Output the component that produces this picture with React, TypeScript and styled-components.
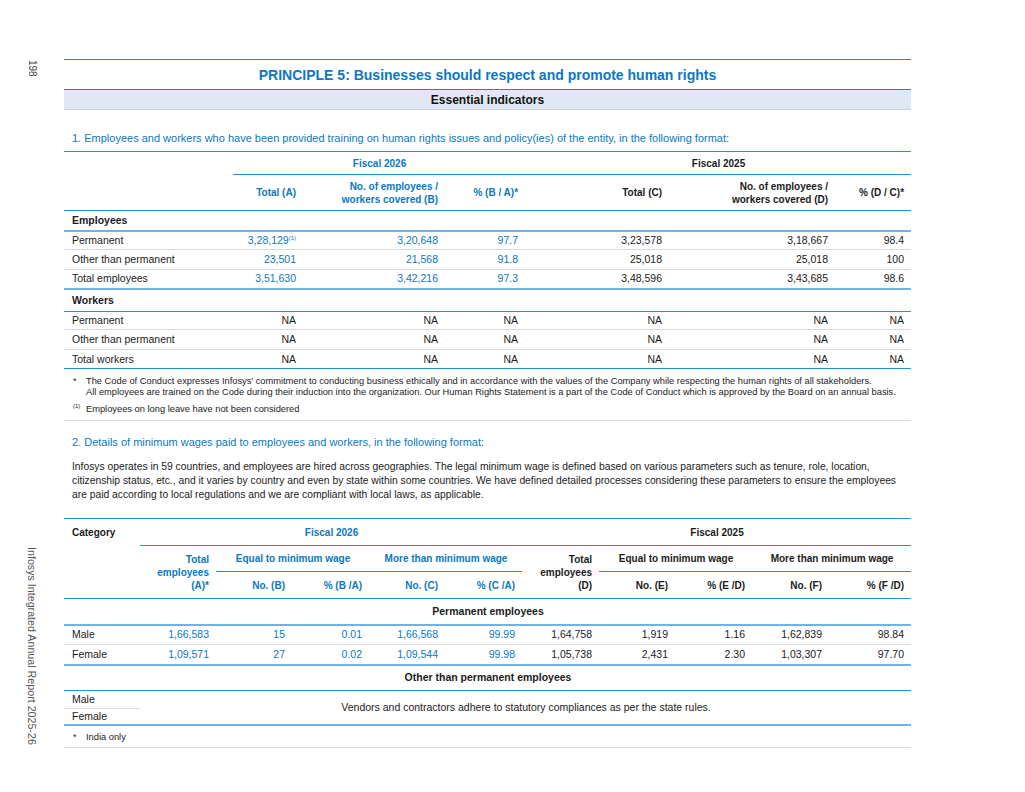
import styled, { createGlobalStyle } from "styled-components";

const GlobalStyle = createGlobalStyle`
  html, body {
    margin: 0;
    padding: 0;
    background: #fff;
  }
  body {
    font-family: "Liberation Sans", Arial, sans-serif;
    color: #1b1b1b;
  }
`;

type Align = "left" | "right" | "center";
type Tone = "blue" | "ink";
type Rule = "none" | "blue" | "heavy" | "grey";

const BLUE = "#0b78c2";
const rules: Record<Rule, string> = {
  none: "none",
  blue: "1px solid #2b8fd5",
  heavy: "2px solid #6db3e6",
  grey: "1px solid #dadada",
};

const Page = styled.div`
  display: flex;
  width: 1025px;
  height: 792px;
`;

const Margin = styled.aside`
  width: 64px;
  box-sizing: border-box;
  padding: 60px 0 47px;
  display: flex;
  flex-direction: column;
  align-items: center;
`;

const PageNumber = styled.span`
  writing-mode: vertical-rl;
  font-size: 10px;
  color: #444;
`;

const Edition = styled(PageNumber)`
  margin-top: auto;
  font-size: 10.7px;
  color: #555;
`;

const Main = styled.main`
  width: 847px;
  padding-top: 59px;
`;

const PrincipleTitle = styled.h1`
  margin: 0;
  box-sizing: border-box;
  height: 30px;
  border-top: 1.5px solid #1c86cf;
  display: flex;
  align-items: center;
  justify-content: center;
  font-size: 14px;
  font-weight: 700;
  color: ${BLUE};
`;

const Band = styled.h2`
  margin: 0;
  box-sizing: border-box;
  height: 21px;
  border-top: 1.5px solid #1c86cf;
  border-bottom: 1px solid #cfd5de;
  background: #e1e8f4;
  display: flex;
  align-items: center;
  justify-content: center;
  font-size: 12px;
  font-weight: 700;
  color: #111;
`;

const Question = styled.p<{ $gap: number }>`
  margin: ${(p) => p.$gap}px 0 0;
  padding-left: 8px;
  font-size: 11px;
  line-height: 14px;
  color: ${BLUE};
`;

const Paragraph = styled.p`
  margin: 11px 0 0;
  padding: 0 6px 0 8px;
  font-size: 10.3px;
  line-height: 14px;
  color: #1b1b1b;
`;

const DataTable = styled.table<{ $gap: number }>`
  width: 100%;
  margin-top: ${(p) => p.$gap}px;
  border-collapse: collapse;
  table-layout: fixed;
  border-top: 1px solid #2b8fd5;
`;

const Col = styled.col<{ $w: number }>`
  width: ${(p) => p.$w}px;
`;

const Row = styled.tr<{ $h: number }>`
  height: ${(p) => p.$h}px;
`;

const HeadCell = styled.th<{ $align?: Align; $tone?: Tone; $rule?: Rule }>`
  padding: 0 7px 0 8px;
  font-size: 10px;
  font-weight: 700;
  line-height: 13px;
  text-align: ${(p) => p.$align ?? "right"};
  color: ${(p) => (p.$tone === "ink" ? "#1b1b1b" : BLUE)};
  border-bottom: ${(p) => rules[p.$rule ?? "none"]};
  vertical-align: middle;
`;

const Cell = styled.td<{ $align?: Align; $tone?: Tone; $rule?: Rule; $bold?: boolean }>`
  padding: 0 7px 0 8px;
  font-size: 10.5px;
  line-height: 13px;
  font-weight: ${(p) => (p.$bold ? 700 : 400)};
  text-align: ${(p) => p.$align ?? "right"};
  color: ${(p) => (p.$tone === "blue" ? BLUE : "#1b1b1b")};
  border-bottom: ${(p) => rules[p.$rule ?? "none"]};
  vertical-align: middle;
  white-space: nowrap;
`;

const Sup = styled.sup`
  font-size: 6px;
  vertical-align: 4px;
  line-height: 0;
`;

const Notes = styled.div<{ $top: number; $bottom: number }>`
  padding: ${(p) => p.$top}px 0 ${(p) => p.$bottom}px 9px;
  border-bottom: 1px solid #d6d6d6;
  display: grid;
  grid-template-columns: 13px 1fr;
  row-gap: 6px;
  font-size: 9.3px;
  line-height: 11px;
  color: #1b1b1b;
`;

const Mark = styled.span`
  font-size: 9px;
`;

const employees = [
  { label: "Permanent", fy26: ["3,28,129", "3,20,648", "97.7"], fy25: ["3,23,578", "3,18,667", "98.4"], note: true },
  { label: "Other than permanent", fy26: ["23,501", "21,568", "91.8"], fy25: ["25,018", "25,018", "100"] },
  { label: "Total employees", fy26: ["3,51,630", "3,42,216", "97.3"], fy25: ["3,48,596", "3,43,685", "98.6"] },
];
const employeeHeights = [19, 20, 19];

const workers = ["Permanent", "Other than permanent", "Total workers"];
const workerHeights = [18, 20, 19];

const wages = [
  { label: "Male", fy26: ["1,66,583", "15", "0.01", "1,66,568", "99.99"], fy25: ["1,64,758", "1,919", "1.16", "1,62,839", "98.84"] },
  { label: "Female", fy26: ["1,09,571", "27", "0.02", "1,09,544", "99.98"], fy25: ["1,05,738", "2,431", "2.30", "1,03,307", "97.70"] },
];

const TrainingTable = () => (
  <DataTable $gap={6}>
    <colgroup>
      {[169, 70, 142, 80, 144, 166, 76].map((w, i) => (
        <Col key={i} $w={w} />
      ))}
    </colgroup>
    <thead>
      <Row $h={23}>
        <HeadCell />
        <HeadCell colSpan={3} $align="center" $rule="blue">
          Fiscal 2026
        </HeadCell>
        <HeadCell colSpan={3} $align="center" $tone="ink" $rule="blue">
          Fiscal 2025
        </HeadCell>
      </Row>
      <Row $h={36}>
        <HeadCell $rule="blue" />
        <HeadCell $rule="blue">Total (A)</HeadCell>
        <HeadCell $rule="blue">
          No. of employees /<br />
          workers covered (B)
        </HeadCell>
        <HeadCell $rule="blue">% (B / A)*</HeadCell>
        <HeadCell $rule="blue" $tone="ink">Total (C)</HeadCell>
        <HeadCell $rule="blue" $tone="ink">
          No. of employees /<br />
          workers covered (D)
        </HeadCell>
        <HeadCell $rule="blue" $tone="ink">% (D / C)*</HeadCell>
      </Row>
    </thead>
    <tbody>
      <Row $h={20}>
        <Cell colSpan={7} $align="left" $bold $rule="heavy">
          Employees
        </Cell>
      </Row>
      {employees.map((r, i) => {
        const rule: Rule = i === employees.length - 1 ? "heavy" : "grey";
        return (
          <Row key={r.label} $h={employeeHeights[i]}>
            <Cell $align="left" $rule={rule}>{r.label}</Cell>
            {r.fy26.map((v, j) => (
              <Cell key={j} $tone="blue" $rule={rule}>
                {v}
                {r.note && j === 0 && <Sup>(1)</Sup>}
              </Cell>
            ))}
            {r.fy25.map((v, j) => (
              <Cell key={j} $rule={rule}>{v}</Cell>
            ))}
          </Row>
        );
      })}
      <Row $h={23}>
        <Cell colSpan={7} $align="left" $bold $rule="blue">
          Workers
        </Cell>
      </Row>
      {workers.map((label, i) => {
        const rule: Rule = i === workers.length - 1 ? "blue" : "grey";
        return (
          <Row key={label} $h={workerHeights[i]}>
            <Cell $align="left" $rule={rule}>{label}</Cell>
            {Array.from({ length: 6 }).map((_, j) => (
              <Cell key={j} $rule={rule}>NA</Cell>
            ))}
          </Row>
        );
      })}
    </tbody>
  </DataTable>
);

const WageTable = () => (
  <DataTable $gap={16}>
    <colgroup>
      {[76, 76, 76, 77, 76, 77, 77, 76, 77, 77, 82].map((w, i) => (
        <Col key={i} $w={w} />
      ))}
    </colgroup>
    <thead>
      <Row $h={27}>
        <HeadCell $align="left" $tone="ink">
          Category
        </HeadCell>
        <HeadCell colSpan={5} $align="center" $rule="blue">
          Fiscal 2026
        </HeadCell>
        <HeadCell colSpan={5} $align="center" $tone="ink" $rule="blue">
          Fiscal 2025
        </HeadCell>
      </Row>
      <Row $h={26}>
        <HeadCell rowSpan={2} $rule="blue" />
        <HeadCell rowSpan={2} $rule="blue">
          Total
          <br />
          employees
          <br />
          (A)*
        </HeadCell>
        <HeadCell colSpan={2} $align="center" $rule="blue">
          Equal to minimum wage
        </HeadCell>
        <HeadCell colSpan={2} $align="center" $rule="blue">
          More than minimum wage
        </HeadCell>
        <HeadCell rowSpan={2} $tone="ink" $rule="blue">
          Total
          <br />
          employees
          <br />
          (D)
        </HeadCell>
        <HeadCell colSpan={2} $align="center" $tone="ink" $rule="blue">
          Equal to minimum wage
        </HeadCell>
        <HeadCell colSpan={2} $align="center" $tone="ink" $rule="blue">
          More than minimum wage
        </HeadCell>
      </Row>
      <Row $h={27}>
        <HeadCell $rule="blue">No. (B)</HeadCell>
        <HeadCell $rule="blue">% (B /A)</HeadCell>
        <HeadCell $rule="blue">No. (C)</HeadCell>
        <HeadCell $rule="blue">% (C /A)</HeadCell>
        <HeadCell $rule="blue" $tone="ink">No. (E)</HeadCell>
        <HeadCell $rule="blue" $tone="ink">% (E /D)</HeadCell>
        <HeadCell $rule="blue" $tone="ink">No. (F)</HeadCell>
        <HeadCell $rule="blue" $tone="ink">% (F /D)</HeadCell>
      </Row>
    </thead>
    <tbody>
      <Row $h={26}>
        <Cell colSpan={11} $align="center" $bold $rule="heavy">
          Permanent employees
        </Cell>
      </Row>
      {wages.map((r, i) => {
        const rule: Rule = i === wages.length - 1 ? "heavy" : "grey";
        return (
          <Row key={r.label} $h={20}>
            <Cell $align="left" $rule={rule}>{r.label}</Cell>
            {r.fy26.map((v, j) => (
              <Cell key={j} $tone="blue" $rule={rule}>{v}</Cell>
            ))}
            {r.fy25.map((v, j) => (
              <Cell key={j} $rule={rule}>{v}</Cell>
            ))}
          </Row>
        );
      })}
      <Row $h={26}>
        <Cell colSpan={11} $align="center" $bold $rule="blue">
          Other than permanent employees
        </Cell>
      </Row>
      <Row $h={18}>
        <Cell $align="left" $rule="grey">Male</Cell>
        <Cell colSpan={10} rowSpan={2} $align="center" $rule="heavy">
          Vendors and contractors adhere to statutory compliances as per the state rules.
        </Cell>
      </Row>
      <Row $h={16}>
        <Cell $align="left" $rule="heavy">Female</Cell>
      </Row>
    </tbody>
  </DataTable>
);

export default function App() {
  return (
    <>
      <GlobalStyle />
      <Page>
        <Margin>
          <PageNumber>198</PageNumber>
          <Edition>Infosys Integrated Annual Report 2025-26</Edition>
        </Margin>
        <Main>
          <PrincipleTitle>PRINCIPLE 5: Businesses should respect and promote human rights</PrincipleTitle>
          <Band>Essential indicators</Band>

          <Question $gap={21}>
            1. Employees and workers who have been provided training on human rights issues and policy(ies) of the
            entity, in the following format:
          </Question>
          <TrainingTable />
          <Notes $top={7} $bottom={5}>
            <Mark>*</Mark>
            <span>
              The Code of Conduct expresses Infosys’ commitment to conducting business ethically and in accordance with
              the values of the Company while respecting the human rights of all stakeholders.
              <br />
              All employees are trained on the Code during their induction into the organization. Our Human Rights
              Statement is a part of the Code of Conduct which is approved by the Board on an annual basis.
            </span>
            <Mark>
              <Sup>(1)</Sup>
            </Mark>
            <span>Employees on long leave have not been considered</span>
          </Notes>

          <Question $gap={14}>2. Details of minimum wages paid to employees and workers, in the following format:</Question>
          <Paragraph>
            Infosys operates in 59 countries, and employees are hired across geographies. The legal minimum wage is
            defined based on various parameters such as tenure, role, location, citizenship status, etc., and it varies
            by country and even by state within some countries. We have defined detailed processes considering these
            parameters to ensure the employees are paid according to local regulations and we are compliant with local
            laws, as applicable.
          </Paragraph>
          <WageTable />
          <Notes $top={6} $bottom={4}>
            <Mark>*</Mark>
            <span>India only</span>
          </Notes>
        </Main>
      </Page>
    </>
  );
}
